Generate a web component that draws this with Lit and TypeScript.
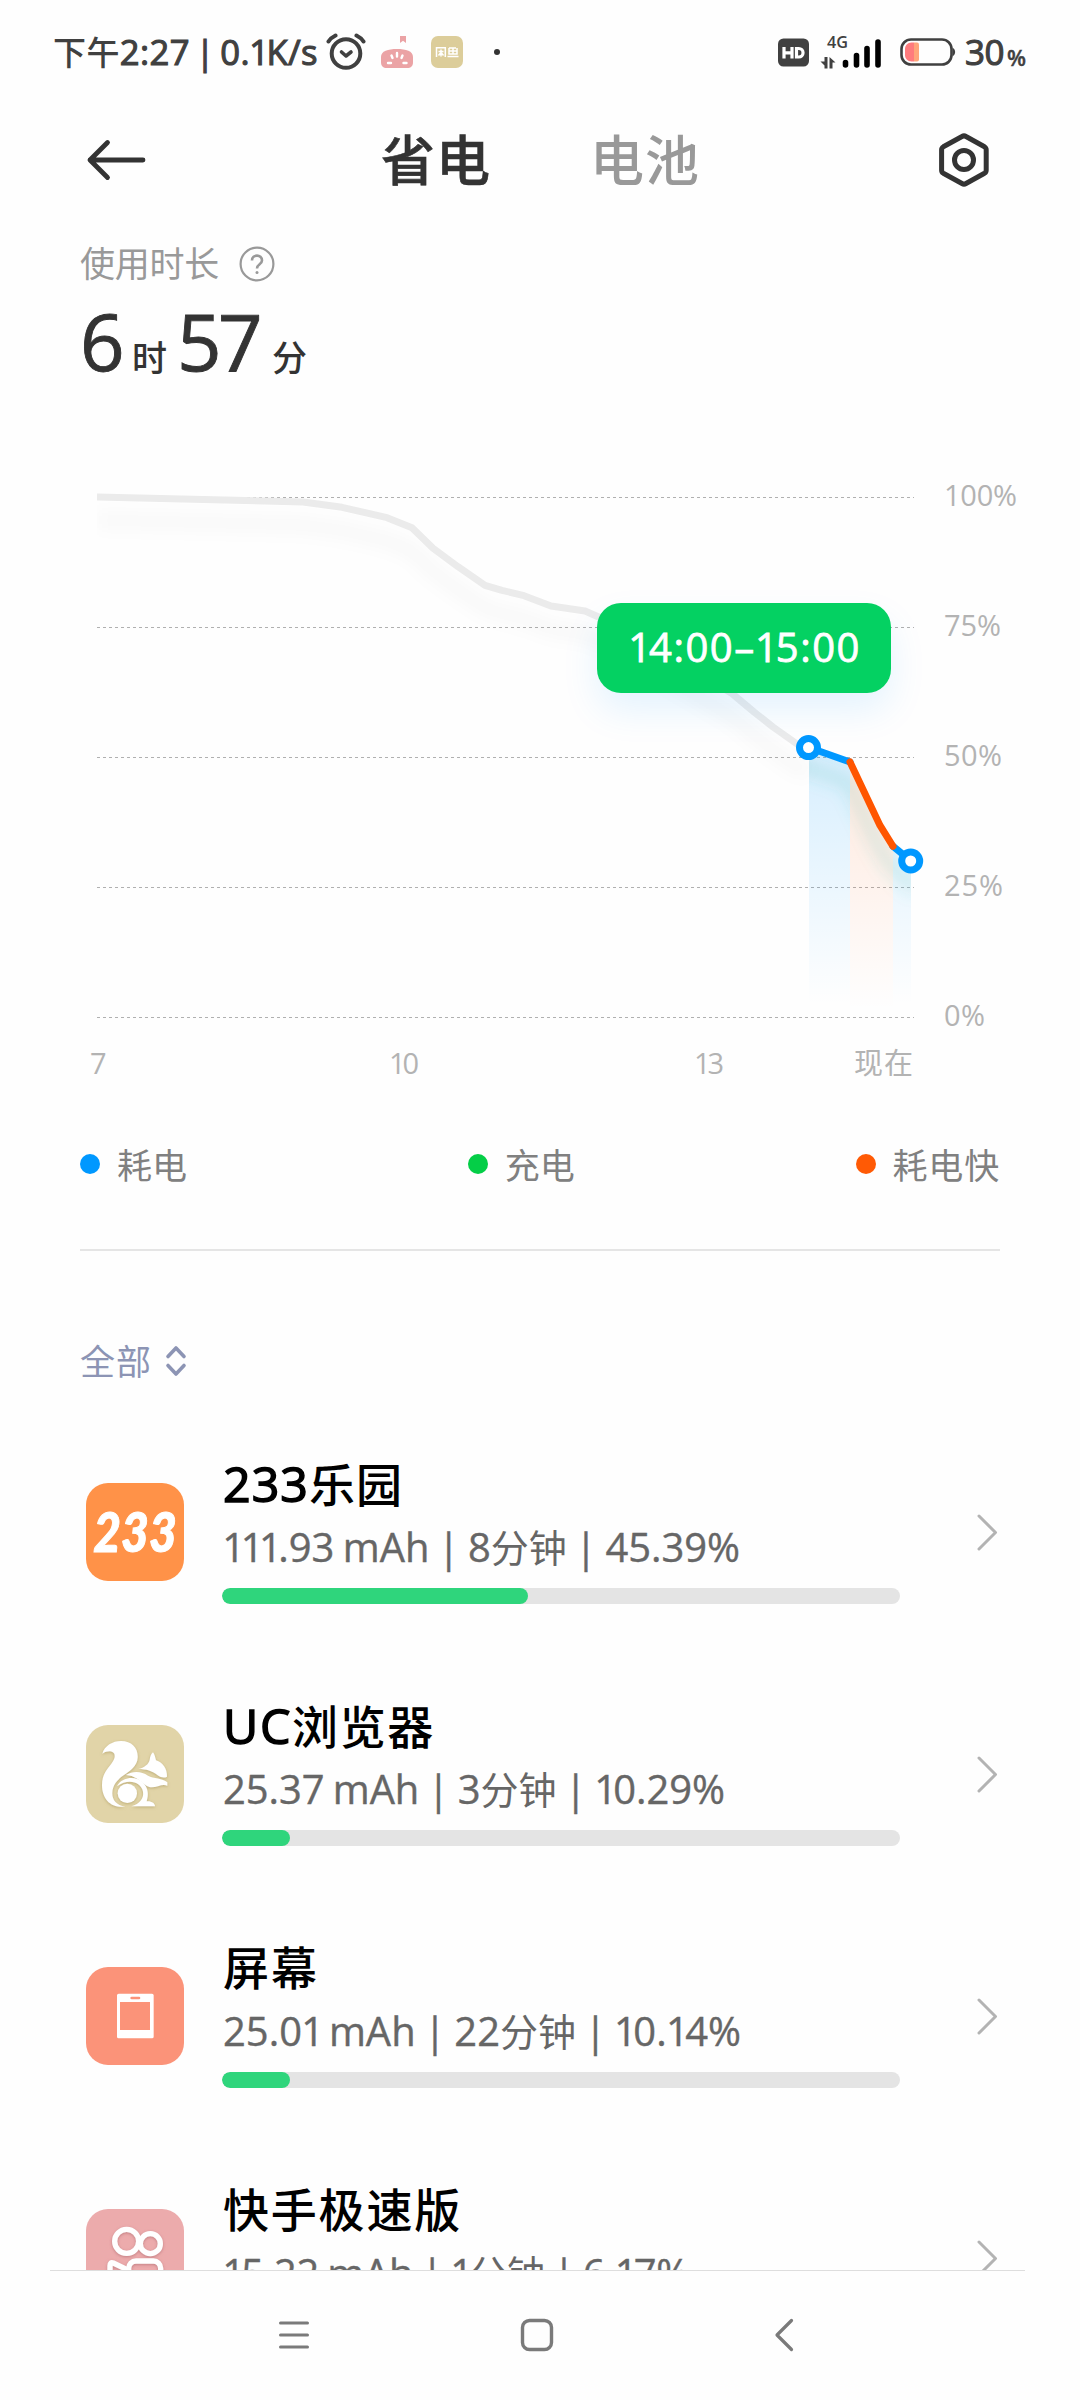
import { LitElement, html, svg, css } from "lit";
import { customElement, property } from "lit/decorators.js";

/** One line of text, tracked so that its advance equals the given width. */
@customElement("fit-text")
class FitText extends LitElement {
  @property() text = "";
  @property({ type: Number }) w = 0;

  static styles = css`
    :host { display: inline-block; white-space: pre; text-align: left; }
    .latin { font-size: var(--latin, 1.05em); -webkit-text-stroke: var(--stroke, 0.4px) currentColor; }
    .one { margin-right: -0.09em; margin-left: -0.02em; }
  `;

  updated() {
    this.style.letterSpacing = "0px";
    this.style.width = "auto";
    const natural = this.getBoundingClientRect().width;
    if (this.w) {
      this.style.letterSpacing = `${(this.w - natural) / this.text.length}px`;
      this.style.width = `${this.w}px`;
    }
  }

  render() {
    const runs = this.text.match(/1|[\x20-\x30\x32-\x7e–]+|[^\x20-\x7e–]+/g) ?? [];
    return runs.map((r) =>
      r === "1"
        ? html`<span class="latin one">1</span>`
        : /[\x20-\x7e–]/.test(r)
          ? html`<span class="latin">${r}</span>`
          : html`<span>${r}</span>`
    );
  }
}

@customElement("status-bar")
class StatusBar extends LitElement {
  static styles = css`
    :host { display: flex; height: 104px; box-sizing: border-box; padding: 0 56px 0 53px; align-items: center; color: #404040; }
    svg { display: block; flex: none; }
    .clock { font-size: 33px; line-height: 104px; --latin: 1.05em; --stroke: 1.1px; font-weight: 500; word-spacing: -4px; }
    .alarm { margin-left: 8px; }
    .app { margin-left: 15px; }
    .app2 { margin-left: 18px; }
    .dot { width: 6px; height: 6px; border-radius: 50%; background: #333; margin-left: 31px; }
    .space { flex: 1; }
    .signal { margin-left: 11px; }
    .battery { margin-left: 17px; }
    .level { font-size: 35px; --latin: 1em; --stroke: 1.1px; margin-left: 9px; font-weight: 500; line-height: 104px; }
    .pct { font-size: 22px; font-weight: 600; line-height: 30px; --latin: 1em; margin: 9px 0 0 3px; }
  `;
  render() {
    return html`
      <fit-text class="clock" text="下午2:27 | 0.1K/s" .w=${265}></fit-text>
      <svg class="alarm" width="40" height="38" viewBox="0 0 40 38" fill="none" stroke="#404040" stroke-linecap="round">
        <circle cx="20" cy="20.500" r="14.300" stroke-width="4" />
        <path d="M15.500 19l4.500 4 5-4" stroke-width="3.600" stroke-linejoin="round" />
        <path d="M2.500 8.500C4 6 6.500 4 9.500 2.500M37.500 8.500C36 6 33.500 4 30.500 2.500" stroke-width="4" />
      </svg>
      <svg class="app" width="32" height="32" viewBox="0 0 32 32">
        <path d="M19 0h6v7l-3-2.300L19 7z" fill="#eba3a5" />
        <path d="M0 21C0 15 7 13 16 13s16 2 16 8v5c0 4-2 6-6 6H6c-4 0-6-2-6-6z" fill="#eba3a5" />
        <g stroke="#fff" stroke-width="2.400" stroke-linecap="round"><path d="M16 17v3.500M10.500 19.500l1 2.500M21.500 19.500l-1 2.500M7 27h3M22.500 27h3" /></g>
      </svg>
      <svg class="app2" width="32" height="32" viewBox="0 0 32 32">
        <rect width="32" height="32" rx="7" fill="#dccd9a" />
        <g fill="none" stroke="#fff" stroke-width="1.500">
          <path d="M5.500 11v10M5 11.700h9.300V21M7.500 15.500h5M10 13.500v7M9.500 17l-2 2.500M10.500 17l2 2.500" />
          <path d="M18 12h7M18 12v6h8v-6M22 12v6M18 15h8M16.500 20.500h11" />
        </g>
      </svg>
      <span class="dot"></span>
      <span class="space"></span>
      <svg width="31" height="29" viewBox="0 0 31 29">
        <rect y=".5" width="31" height="28" rx="5.500" fill="#404040" />
        <g fill="none" stroke="#fff" stroke-width="3.200">
          <path d="M6 9v11.500M14 9v11.500M6 14.800h8" />
          <path d="M18.500 10.500h2.300a4.200 4.200 0 0 1 0 8.500h-2.300z" />
        </g>
      </svg>
      <svg class="signal" width="63" height="34" viewBox="0 0 63 34">
        <text x="7" y="13" font-family="Open Sans, sans-serif" font-size="15.500" font-weight="600" textLength="21" lengthAdjust="spacingAndGlyphs" fill="#404040">4G</text>
        <path d="M4.500 22h3v11.500h-3v-3L.5 26.500h4zM9.500 22l6 5.500h-3v6h-3z" fill="#404040" />
        <g stroke="#000" stroke-width="5.600" stroke-linecap="round"><path d="M25.500 27.500v2.500M36.500 20.500v9.500M47 13.500v16.500M58 7v23" /></g>
      </svg>
      <svg class="battery" width="56" height="28" viewBox="0 0 56 28">
        <rect x="1.500" y="1.500" width="50" height="25" rx="9.500" fill="none" stroke="#404040" stroke-width="2.600" />
        <path d="M52.500 9.500c3.500 2.500 3.500 6.500 0 9z" fill="#404040" />
        <path d="M14 4.500v19h-2.500c-4 0-6.500-3-6.500-6.500v-6c0-3.500 2.500-6.500 6.500-6.500z" fill="#ff7b7d" />
        <path d="M14 4.500h3q2 0 2 2v15q0 2-2 2h-3z" fill="#ffa57a" />
      </svg>
      <fit-text class="level" text="30" .w=${39}></fit-text>
      <fit-text class="pct" text="%" .w=${17}></fit-text>
    `;
  }
}

@customElement("title-bar")
class TitleBar extends LitElement {
  static styles = css`
    :host { display: flex; height: 112px; box-sizing: border-box; padding: 0 90px 0 86px; align-items: center; }
    svg { display: block; }
    .tab { font-size: 54px; line-height: 112px; font-weight: 500; color: #333; }
    .tab.on { margin-left: 235px; -webkit-text-stroke: 0.6px #333; }
    .tab.off { margin-left: 99px; color: #999; }
    .set { margin-left: auto; }
  `;
  render() {
    return html`
      <svg width="60" height="42" viewBox="0 0 60 42" fill="none" stroke="#333" stroke-width="4.800" stroke-linecap="round" stroke-linejoin="round">
        <path d="M21.500 3.500L4 21l17.500 17.500M4 21h53" />
      </svg>
      <fit-text class="tab on" text="省电" .w=${110}></fit-text>
      <fit-text class="tab off" text="电池" .w=${110}></fit-text>
      <svg class="set" width="52" height="56" viewBox="0 0 52 56" fill="none" stroke="#333" stroke-width="5" stroke-linejoin="round">
        <path d="M24 4.500q2-1.200 4 0l18.500 10.300q1.700 1 1.700 3v20.400q0 2-1.700 3L28 51.500q-2 1.200-4 0L5.300 41.200q-1.700-1-1.700-3V17.800q0-2 1.700-3z" />
        <circle cx="26" cy="28" r="9.500" />
      </svg>
    `;
  }
}

@customElement("usage-time")
class UsageTime extends LitElement {
  static styles = css`
    :host { display: block; height: 176px; padding-left: 80px; }
    .caption { display: flex; align-items: center; height: 94px; padding-bottom: 1px; color: #999; }
    .label { font-size: 35px; line-height: 94px; }
    .help { margin-left: 20px; }
    .caption { padding-top: 1px; box-sizing: content-box; }
    .value { display: flex; align-items: baseline; color: #333; height: 79px; line-height: 58px; }
    .num { font-size: 78px; --latin: 1em; --stroke: 0.9px; }
    .unit { font-size: 35px; font-weight: 500; line-height: 30px; }
    .u1 { margin-left: 12px; }
    .n2 { margin-left: 9px; }
    .u2 { margin-left: 13px; }
  `;
  render() {
    return html`
      <div class="caption">
        <fit-text class="label" text="使用时长" .w=${139}></fit-text>
        <svg class="help" width="36" height="36" viewBox="0 0 36 36" fill="none" stroke="#999">
          <circle cx="18" cy="18" r="16.400" stroke-width="2.200" />
          <path d="M13 14.500c0-6.500 10-6.500 10 0 0 4-5 3.500-5 8" stroke-width="2.600" />
          <circle cx="18" cy="26.500" r="1.500" fill="#999" stroke="none" />
        </svg>
      </div>
      <div class="value">
        <fit-text class="num" text="6" .w=${40}></fit-text>
        <fit-text class="unit u1" text="时" .w=${36}></fit-text>
        <fit-text class="num n2" text="57" .w=${82}></fit-text>
        <fit-text class="unit u2" text="分" .w=${36}></fit-text>
      </div>
    `;
  }
}

const HISTORY = "M97 497L235 500.300 303 502 342 507.300 387 517.700 412 527.700 433 548.300 458 566.700 485 585.300 502 590.300 524 595.700 551 606 585 611 610 622 732 693.500 754 712 773 727 797 744 809 747.500";
const GRID = [
  { y: 497.5, label: "100%", w: 73 },
  { y: 627.5, label: "75%", w: 57 },
  { y: 757.5, label: "50%", w: 58 },
  { y: 887.5, label: "25%", w: 59 },
  { y: 1017.5, label: "0%", w: 41 },
];
const HOURS = [
  { x: 90, label: "7", w: 15 },
  { x: 389, label: "10", w: 30 },
  { x: 694, label: "13", w: 30 },
  { x: 854, label: "现在", w: 59 },
];

@customElement("battery-chart")
class BatteryChart extends LitElement {
  static styles = css`
    :host { display: block; position: relative; height: 708px; }
    svg { display: block; }
    .axis { font-family: "Open Sans", "Noto Sans CJK SC", sans-serif; font-size: 29px; fill: #b3b3b3; }
    .tip {
      position: absolute; left: 597px; top: 211px; width: 294px; height: 90px; box-sizing: border-box;
      padding-left: 32px; border-radius: 24px; background: #04d162; color: #fff;
      font-size: 40px; line-height: 88px; --latin: 1em; --stroke: 0.8px;
      box-shadow: 0 18px 36px rgba(0, 149, 255, 0.1);
    }
  `;
  render() {
    return html`
      <svg width="1080" height="708" viewBox="0 392 1080 708">
        <defs>
          <linearGradient id="b" gradientUnits="userSpaceOnUse" x1="0" y1="747" x2="0" y2="1005">
            <stop offset="0" stop-color="#0098ff" stop-opacity=".16" /><stop offset="1" stop-color="#0098ff" stop-opacity="0" />
          </linearGradient>
          <linearGradient id="o" gradientUnits="userSpaceOnUse" x1="0" y1="747" x2="0" y2="1010">
            <stop offset="0" stop-color="#ff5500" stop-opacity=".14" /><stop offset="1" stop-color="#ff5500" stop-opacity="0" />
          </linearGradient>
          <filter id="s" x="-10%" y="-30%" width="120%" height="170%"><feGaussianBlur stdDeviation="8" /></filter>
          <clipPath id="c"><path d="M97 392H911V1100H97z" /></clipPath>
          <clipPath id="band"><path d="M809 747L850 762 880 825.400 893 846.300 911 861V1017H809z" /></clipPath>
        </defs>
        ${GRID.map((g) => svg`
          <path d="M97 ${g.y}H914" stroke="#b0b0b0" stroke-width="1" stroke-dasharray="3 3" />
          <text class="axis" x="944" y=${g.y + 8.5} textLength=${g.w}>${g.label}</text>`)}
        ${HOURS.map((h) => svg`<text class="axis" x=${h.x} y="1073.500" textLength=${h.w}>${h.label}</text>`)}
        <g clip-path="url(#c)" fill="none">
          <path d=${HISTORY} stroke="#000" stroke-opacity=".024" stroke-width="16" transform="translate(0 23)" filter="url(#s)" />
          <path d=${HISTORY} stroke="#ebebeb" stroke-width="7" stroke-linejoin="round" />
        </g>
        <path d="M809 747L850 762V1017H809z" fill="url(#b)" />
        <path d="M850 762L880 825.400 893 846.300V1017H850z" fill="url(#o)" />
        <path d="M893 846.300L911 861V1017H893z" fill="url(#b)" />
        <g clip-path="url(#band)"><path d="M790 741L850 762 880 825.400 893 846.300 920 870" fill="none" stroke="#3db4a8" stroke-opacity=".17" stroke-width="14" transform="translate(-2 20)" filter="url(#s)" /></g>
        <g fill="none" stroke-width="7" stroke-linecap="round" stroke-linejoin="round">
          <path d="M809 747.500L850 762M893 846.300L911 861" stroke="#0098ff" />
          <path d="M850 762L880 825.400 893 846.300" stroke="#ff5500" />
        </g>
        <g fill="#fff" stroke="#0098ff" stroke-width="7"><circle cx="808.500" cy="747.600" r="9" /><circle cx="910.700" cy="861" r="9" /></g>
      </svg>
      <div class="tip"><fit-text text="14:00–15:00" .w=${232}></fit-text></div>
    `;
  }
}

@customElement("chart-legend")
class ChartLegend extends LitElement {
  static styles = css`
    :host { display: flex; justify-content: space-between; height: 149px; margin: 0 80px; border-bottom: 2px solid #e5e5e5; color: #808080; font-size: 35px; line-height: 132px; }
    .item { display: flex; align-items: center; height: 132px; }
    .dot { width: 20px; height: 20px; border-radius: 50%; margin: -4px 17px 0 0; }
    .blue { background: #0098ff; } .green { background: #04ce47; } .orange { background: #ff5a05; }
  `;
  render() {
    return html`
      <div class="item"><span class="dot blue"></span><fit-text text="耗电" .w=${70}></fit-text></div>
      <div class="item"><span class="dot green"></span><fit-text text="充电" .w=${70}></fit-text></div>
      <div class="item"><span class="dot orange"></span><fit-text text="耗电快" .w=${107.5}></fit-text></div>
    `;
  }
}

const icons = {
  game: svg`<rect width="294" height="294" rx="66" fill="#ff9248" />
    <text x="22" y="207" font-family="Lato, sans-serif" font-size="164" font-weight="900" font-style="italic" fill="#fff" stroke="#fff" stroke-width="3" textLength="250" lengthAdjust="spacingAndGlyphs">233</text>`,
  squirrel: svg`<defs><filter id="d" x="-20%" y="-20%" width="140%" height="140%"><feDropShadow dx="0" dy="3" stdDeviation="4" flood-color="#a08c4c" flood-opacity=".55" /></filter></defs>
    <rect width="294" height="294" rx="66" fill="#e1d4a8" />
    <g fill="#fff" filter="url(#d)">
      <path d="M49 86C56 62 80 48 105 48C138 48 157 70 155 98C154 122 132 138 114 150C92 165 80 182 79 203C78 224 90 240 118 245C74 250 48 222 48 180C48 150 62 134 76 116C92 96 88 80 72 79C64 79 56 81 49 86z" />
      <path d="M157 132C175 128 188 118 191 105C192 95 196 86 201 82C206 88 208 98 210 106C230 112 244 132 243 155C235 160 225 158 215 151C200 138 180 132 157 132z" />
      <path d="M120 150C140 138 165 138 186 152C202 162 230 158 244 172V182C228 174 210 190 190 186C170 180 155 152 120 150z" />
      <path d="M93 184C106 156 148 150 170 172C188 190 188 210 182 229C198 228 207 236 207 244H136C162 236 174 220 171 200C166 172 128 158 93 184z" />
      <circle cx="124" cy="205" r="29" />
    </g>`,
  screen: svg`<rect width="294" height="294" rx="66" fill="#fb9379" />
    <path fill-rule="evenodd" fill="#fff" d="M98 80h100q5 0 5 5v124q0 5-5 5H98q-5 0-5-5V85q0-5 5-5zM102 105v84h90v-84zM137 89q-4 0-4 4t4 4h22q4 0 4-4t-4-4z" />`,
  camera: svg`<defs><filter id="k" x="-20%" y="-20%" width="140%" height="140%"><feDropShadow dx="0" dy="3" stdDeviation="5" flood-color="#a05a5e" flood-opacity=".55" /></filter></defs>
    <rect width="294" height="294" rx="66" fill="#ecabac" />
    <g fill="none" stroke="#fff" stroke-width="16" filter="url(#k)">
      <circle cx="122" cy="97" r="36" /><circle cx="193" cy="104" r="30" />
      <rect x="128" y="156" width="96" height="80" rx="22" /><path d="M128 184L82 162Q72 158 72 170V222Q72 234 82 230L128 208" />
    </g>`,
};

const APPS = [
  { icon: icons.game, name: "233乐园", w: 180, info: "111.93 mAh | 8分钟 | 45.39%", iw: 517, pct: 45.13 },
  { icon: icons.squirrel, name: "UC浏览器", w: 212, info: "25.37 mAh | 3分钟 | 10.29%", iw: 502, pct: 10.03 },
  { icon: icons.screen, name: "屏幕", w: 96, info: "25.01 mAh | 22分钟 | 10.14%", iw: 518, pct: 10.03 },
  { icon: icons.camera, name: "快手极速版", w: 239, info: "15.22 mAh | 1分钟 | 6.17%", iw: 466, pct: 6.17 },
];

@customElement("app-usage-list")
class AppUsageList extends LitElement {
  static styles = css`
    :host { display: block; height: 1019px; overflow: hidden; }
    .filter { display: flex; align-items: center; height: 202px; padding: 20px 0 0 80px; box-sizing: border-box; color: #8c94b4; font-size: 35px; line-height: 182px; }
    .filter svg { margin: 0 0 2px 13px; }
    .row { display: flex; align-items: flex-start; height: 242px; padding: 0 80px 0 86px; }
    .row svg { display: block; flex: none; }
    .icon { margin: 30px 38px 0 0; }
    .body { width: 678px; }
    .name, .info { display: block; padding-left: 1px; }
    .name { font-size: 46px; line-height: 60px; height: 60px; font-weight: 500; color: #000; --stroke: 1.5px; }
    .info { font-size: 38px; line-height: 50px; height: 50px; margin-top: 9px; color: #666; word-spacing: -2px; }
    .track { margin-top: 16px; height: 16px; border-radius: 8px; background: #e4e4e4; overflow: hidden; }
    .fill { height: 16px; border-radius: 8px; background: #2fd57c; }
    .go { margin: 60px 0 0 auto; }
  `;
  render() {
    return html`
      <div class="filter">
        <fit-text text="全部" .w=${72}></fit-text>
        <svg width="22" height="32" viewBox="0 0 22 32" fill="none" stroke="#8c94b4" stroke-width="3.600" stroke-linecap="round" stroke-linejoin="round"><path d="M3 11.500l8-8.500 8 8.500M3 20.500l8 8.500 8-8.500" /></svg>
      </div>
      ${APPS.map((a) => html`
        <div class="row">
          <svg class="icon" width="98" height="98" viewBox="0 0 294 294">${a.icon}</svg>
          <div class="body">
            <div class="name"><fit-text text=${a.name} .w=${a.w}></fit-text></div>
            <div class="info"><fit-text text=${a.info} .w=${a.iw}></fit-text></div>
            <div class="track"><div class="fill" style="width:${a.pct}%"></div></div>
          </div>
          <svg class="go" width="24" height="40" viewBox="0 0 24 40" fill="none" stroke="#b3b3b3" stroke-width="3" stroke-linecap="round" stroke-linejoin="round"><path d="M3 3l16.500 16.500L3 36" /></svg>
        </div>`)}
    `;
  }
}

@customElement("nav-keys")
class NavKeys extends LitElement {
  static styles = css`
    :host { display: flex; align-items: center; height: 130px; box-sizing: border-box; margin: 0 55px 0 50px; padding: 0 0 2px 228px; border-top: 1px solid #dedede; }
    svg { display: block; flex: none; }
    .home { margin-left: 210px; }
    .back { margin-left: 219px; }
  `;
  render() {
    return html`
      <svg width="32" height="32" viewBox="0 0 32 32" stroke="#7a7a7a" stroke-width="3" stroke-linecap="round"><path d="M2.500 4h27M2.500 16h27M2.500 28h27" /></svg>
      <svg class="home" width="34" height="34" viewBox="0 0 34 34" fill="none" stroke="#7a7a7a" stroke-width="3.400"><rect x="2.500" y="2.500" width="29" height="29" rx="7" /></svg>
      <svg class="back" width="22" height="34" viewBox="0 0 22 34" fill="none" stroke="#7a7a7a" stroke-width="3.200" stroke-linecap="round" stroke-linejoin="round"><path d="M18.500 2.500L4 17l14.500 14.500" /></svg>
    `;
  }
}

@customElement("app-root")
class AppRoot extends LitElement {
  static styles = css`
    :host { display: flex; flex-direction: column; width: 1080px; height: 2400px; overflow: hidden; background: #fefefe; font-family: "Open Sans", "Noto Sans CJK SC", sans-serif; }
  `;
  render() {
    return html`
      <status-bar></status-bar>
      <title-bar></title-bar>
      <usage-time></usage-time>
      <battery-chart></battery-chart>
      <chart-legend></chart-legend>
      <app-usage-list></app-usage-list>
      <nav-keys></nav-keys>
    `;
  }
}
